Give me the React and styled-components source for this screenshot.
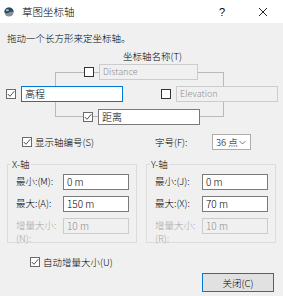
import React from "react";
import styled, { createGlobalStyle } from "styled-components";

const Global = createGlobalStyle`
  html, body { margin: 0; padding: 0; background: #f0f0f0; }
  body { font-family: "Noto Sans CJK SC", "Noto Sans", sans-serif; }
`;

function App() {
  return (
    <Window>
      <Global />
      <TitleBar>
        <AppIcon />
        <Title>草图坐标轴</Title>
        <Help>?</Help>
        <CloseX>
          <svg width="10" height="10" viewBox="0 0 10 10">
            <path d="M1 1 L9 9 M9 1 L1 9" stroke="#222" strokeWidth="1" fill="none" />
          </svg>
        </CloseX>
      </TitleBar>

      <Intro>拖动一个长方形来定坐标轴。</Intro>
      <AxisTitle>坐标轴名称(T)</AxisTitle>

      <Diagram>
        <Frame />
        <DiagramRow $pad={84} $top={0}>
          <Check />
          <TextBox $w={99} $disabled $latin>Distance</TextBox>
        </DiagramRow>
        <DiagramRow $pad={6} $top={6}>
          <Check checked />
          <TextBox $w={102} $focus>高程</TextBox>
          <Spacer $w={38} />
          <Check />
          <TextBox $w={102} $disabled $latin>Elevation</TextBox>
        </DiagramRow>
        <DiagramRow $pad={83} $top={7}>
          <Check checked />
          <TextBox $w={102}>距离</TextBox>
        </DiagramRow>
      </Diagram>

      <OptionsRow>
        <Check checked />
        <CheckLabel>显示轴编号(S)</CheckLabel>
        <FontLabel>字号(F):</FontLabel>
        <Combo>
          <span>36 点</span>
          <svg width="7" height="5" viewBox="0 0 7 5">
            <path d="M0.5 1 L3.5 4 L6.5 1" stroke="#777" fill="none" strokeWidth="1" />
          </svg>
        </Combo>
      </OptionsRow>

      <Groups>
        <AxisGroup title="X-轴" rows={[["最小:(M):", "0 m"], ["最大:(A):", "150 m"], ["增量大小:(N):", "10 m"]]} />
        <AxisGroup title="Y-轴" rows={[["最小:(J):", "0 m"], ["最大:(X):", "70 m"], ["增量大小:(R):", "10 m"]]} />
      </Groups>

      <AutoRow>
        <Check checked />
        <CheckLabel>自动增量大小(U)</CheckLabel>
      </AutoRow>

      <ButtonRow>
        <Button>关闭(C)</Button>
      </ButtonRow>
    </Window>
  );
}

function AxisGroup({ title, rows }) {
  return (
    <Group>
      <Legend>{title}</Legend>
      <GroupGrid>
        {rows.map(([label, value], i) => {
          const disabled = i === 2;
          return (
            <React.Fragment key={label}>
              <FieldLabel $disabled={disabled}>{label}</FieldLabel>
              <TextBox $w={66} $disabled={disabled}>{value}</TextBox>
            </React.Fragment>
          );
        })}
      </GroupGrid>
    </Group>
  );
}

function Check({ checked }) {
  return (
    <Box $checked={checked}>
      {checked && (
        <svg width="8" height="8" viewBox="0 0 8 8">
          <path d="M0.8 4 L3 6.3 L7.3 1.2" stroke="#555" strokeWidth="1" fill="none" />
        </svg>
      )}
    </Box>
  );
}

function AppIcon() {
  return (
    <IconWrap>
      <svg width="10" height="10" viewBox="0 0 10 10">
        <circle cx="5" cy="5" r="4.6" fill="#8a8f94" />
        <path d="M0.4 5 A4.6 4.6 0 0 1 9.6 5 Q7 3.6 5 5.6 Q2.6 7.2 0.4 5 Z" fill="#1f4e63" />
        <ellipse cx="3.4" cy="3.2" rx="1.6" ry="1" fill="#cfd9de" opacity="0.8" />
      </svg>
    </IconWrap>
  );
}

export default App;

const Window = styled.div`
  width: 283px;
  height: 296px;
  background: #f0f0f0;
  display: flex;
  flex-direction: column;
  overflow: hidden;
  color: #000;
  font-size: 9.5px;
  font-weight: 300;
`;

const TitleBar = styled.div`
  height: 23px;
  background: #fff;
  display: flex;
  align-items: center;
  flex-shrink: 0;
`;

const IconWrap = styled.div`
  width: 10px;
  height: 10px;
  margin-left: 4px;
  display: flex;
`;

const Title = styled.div`
  margin-left: 8px;
  font-size: 10.5px;
  flex: 1;
`;

const Help = styled.div`
  font-family: "Liberation Sans", sans-serif;
  font-size: 11px;
  width: 10px;
  margin-right: 29px;
`;

const CloseX = styled.div`
  display: flex;
  margin-right: 15px;
`;

const Intro = styled.div`
  margin: 8px 0 0 7px;
  height: 14px;
  line-height: 14px;
`;

const AxisTitle = styled.div`
  margin: 4px 0 0 123px;
  height: 14px;
  line-height: 14px;
`;

const Diagram = styled.div`
  position: relative;
  margin-top: 1px;
  height: 61px;
`;

const Frame = styled.div`
  position: absolute;
  left: 55px;
  top: 8px;
  width: 169px;
  height: 45px;
  box-sizing: border-box;
  border: 1px solid #b9b9b9;
`;

const DiagramRow = styled.div`
  position: relative;
  display: flex;
  align-items: center;
  gap: 5px;
  height: 16px;
  padding-left: ${(p) => p.$pad}px;
  margin-top: ${(p) => p.$top}px;
`;

const Spacer = styled.div`
  width: ${(p) => p.$w - 10}px;
`;

const Box = styled.span`
  width: 10px;
  height: 10px;
  box-sizing: border-box;
  border: 1px solid ${(p) => (p.$checked ? "#6a6a6a" : "#333")};
  background: #fff;
  display: flex;
  align-items: center;
  justify-content: center;
  flex-shrink: 0;
`;

const TextBox = styled.div`
  width: ${(p) => p.$w}px;
  height: 16px;
  box-sizing: border-box;
  border: 1px solid
    ${(p) => (p.$focus ? "#0078d7" : p.$disabled ? "#cccccc" : "#7a7a7a")};
  background: ${(p) => (p.$disabled ? "#f0f0f0" : "#fff")};
  color: ${(p) => (p.$disabled ? "#8d8d8d" : "#000")};
  font-size: ${(p) => (p.$latin ? "9px" : "10px")};
  line-height: 14px;
  padding-left: 3px;
  white-space: nowrap;
`;

const OptionsRow = styled.div`
  display: flex;
  align-items: center;
  height: 16px;
  margin-top: 9px;
  padding-left: 22px;
`;

const CheckLabel = styled.span`
  margin-left: 3px;
  line-height: 14px;
`;

const FontLabel = styled.span`
  margin-left: 61px;
  width: 57px;
`;

const Combo = styled.div`
  width: 39px;
  height: 16px;
  box-sizing: border-box;
  border: 1px solid #adadad;
  background: #fff;
  display: flex;
  align-items: center;
  justify-content: space-between;
  padding: 0 4px 0 3px;
  line-height: 14px;
`;

const Groups = styled.div`
  display: flex;
  gap: 9px;
  padding-left: 7px;
  margin-top: 7px;
`;

const Group = styled.fieldset`
  width: 130px;
  box-sizing: border-box;
  margin: 0;
  min-width: 0;
  border: 1px solid #dcdcdc;
  padding: 3px 8px 8px 8px;
`;

const Legend = styled.legend`
  margin-left: -5px;
  padding: 0 1px;
  line-height: 14px;
  height: 14px;
`;

const GroupGrid = styled.div`
  display: grid;
  grid-template-columns: 47px 66px;
  grid-auto-rows: 16px;
  row-gap: 6px;
  align-items: start;
`;

const FieldLabel = styled.div`
  color: ${(p) => (p.$disabled ? "#a8a8a8" : "#000")};
  line-height: 13px;
  padding-top: 1px;
  white-space: normal;
  overflow: visible;
`;

const AutoRow = styled.div`
  display: flex;
  align-items: center;
  height: 16px;
  margin-top: 11px;
  padding-left: 30px;
`;

const ButtonRow = styled.div`
  display: flex;
  justify-content: flex-end;
  padding-right: 9px;
  margin-top: 3px;
`;

const Button = styled.div`
  width: 72px;
  height: 19px;
  box-sizing: border-box;
  border: 1px solid #0078d7;
  background: #e1e1e1;
  display: flex;
  align-items: center;
  justify-content: center;
`;
